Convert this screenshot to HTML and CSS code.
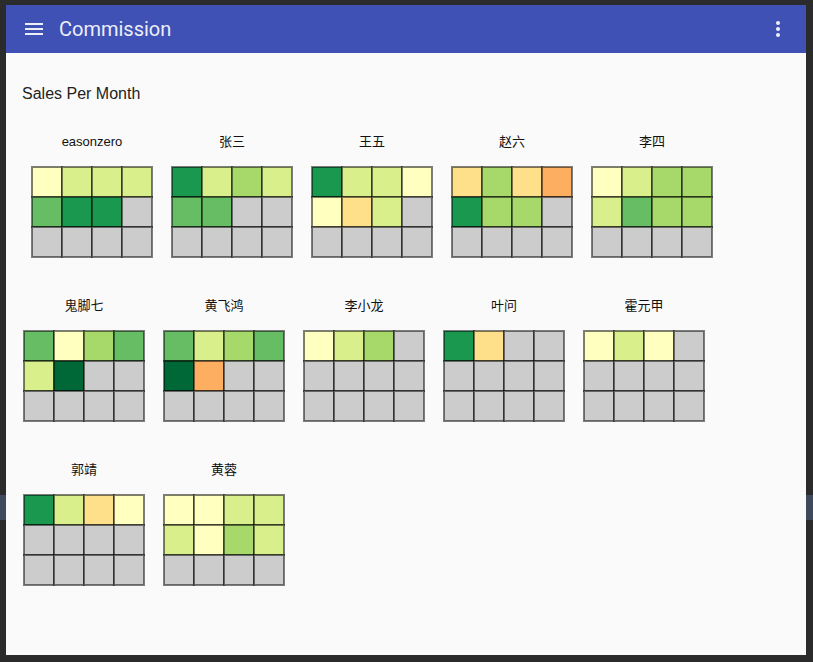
FILE: index.html
```html
<!DOCTYPE html>
<html lang="en">
<head>
<meta charset="utf-8">
<title>Commission</title>
<link rel="stylesheet" href="styles.css">
</head>
<body>
<div class="window">
  <header class="toolbar">
    <svg class="icon" viewBox="0 0 24 24" width="24" height="24"><path d="M3 6h18v2H3zM3 11h18v2H3zM3 16h18v2H3z"/></svg>
    <h1 class="title">Commission</h1>
    <span class="spacer"></span>
    <svg class="icon" viewBox="0 0 24 24" width="24" height="24"><circle cx="12" cy="6" r="2"/><circle cx="12" cy="12" r="2"/><circle cx="12" cy="18" r="2"/></svg>
  </header>
  <main class="content">
    <h2 class="heading">Sales Per Month</h2>
    <div class="charts">
      <div class="row first">
        <div class="item"><div class="label">easonzero</div>
          <div class="grid"><i class="y"></i><i class="lg"></i><i class="lg"></i><i class="lg"></i><i class="g"></i><i class="dg"></i><i class="dg"></i><i></i><i></i><i></i><i></i><i></i></div></div>
        <div class="item"><div class="label">张三</div>
          <div class="grid"><i class="dg"></i><i class="lg"></i><i class="mg"></i><i class="lg"></i><i class="g"></i><i class="g"></i><i></i><i></i><i></i><i></i><i></i><i></i></div></div>
        <div class="item"><div class="label">王五</div>
          <div class="grid"><i class="dg"></i><i class="lg"></i><i class="lg"></i><i class="y"></i><i class="y"></i><i class="lo"></i><i class="lg"></i><i></i><i></i><i></i><i></i><i></i></div></div>
        <div class="item"><div class="label">赵六</div>
          <div class="grid"><i class="lo"></i><i class="mg"></i><i class="lo"></i><i class="o"></i><i class="dg"></i><i class="mg"></i><i class="mg"></i><i></i><i></i><i></i><i></i><i></i></div></div>
        <div class="item"><div class="label">李四</div>
          <div class="grid"><i class="y"></i><i class="lg"></i><i class="mg"></i><i class="mg"></i><i class="lg"></i><i class="g"></i><i class="mg"></i><i class="mg"></i><i></i><i></i><i></i><i></i></div></div>
      </div>
      <div class="row">
        <div class="item"><div class="label">鬼脚七</div>
          <div class="grid"><i class="g"></i><i class="y"></i><i class="mg"></i><i class="g"></i><i class="lg"></i><i class="xg"></i><i></i><i></i><i></i><i></i><i></i><i></i></div></div>
        <div class="item"><div class="label">黄飞鸿</div>
          <div class="grid"><i class="g"></i><i class="lg"></i><i class="mg"></i><i class="g"></i><i class="xg"></i><i class="o"></i><i></i><i></i><i></i><i></i><i></i><i></i></div></div>
        <div class="item"><div class="label">李小龙</div>
          <div class="grid"><i class="y"></i><i class="lg"></i><i class="mg"></i><i></i><i></i><i></i><i></i><i></i><i></i><i></i><i></i><i></i></div></div>
        <div class="item"><div class="label">叶问</div>
          <div class="grid"><i class="dg"></i><i class="lo"></i><i></i><i></i><i></i><i></i><i></i><i></i><i></i><i></i><i></i><i></i></div></div>
        <div class="item"><div class="label">霍元甲</div>
          <div class="grid"><i class="y"></i><i class="lg"></i><i class="y"></i><i></i><i></i><i></i><i></i><i></i><i></i><i></i><i></i><i></i></div></div>
      </div>
      <div class="row">
        <div class="item"><div class="label">郭靖</div>
          <div class="grid"><i class="dg"></i><i class="lg"></i><i class="lo"></i><i class="y"></i><i></i><i></i><i></i><i></i><i></i><i></i><i></i><i></i></div></div>
        <div class="item"><div class="label">黄蓉</div>
          <div class="grid"><i class="y"></i><i class="y"></i><i class="lg"></i><i class="lg"></i><i class="lg"></i><i class="y"></i><i class="mg"></i><i class="lg"></i><i></i><i></i><i></i><i></i></div></div>
      </div>
    </div>
  </main>
</div>
</body>
</html>
```

FILE: styles.css
```css
html, body {
  margin: 0;
  padding: 0;
}
body {
  background:
    linear-gradient(to bottom, transparent 495px, #3e4a5c 495px, #3e4a5c 520px, transparent 520px),
    #2b2b2b;
  height: 662px;
  overflow: hidden;
  font-family: "Liberation Sans", Arial, "Noto Sans CJK SC", sans-serif;
  padding: 5px 0 0 6px;
  box-sizing: border-box;
}
.window {
  width: 800px;
  height: 650px;
  background: #fafafa;
  display: flex;
  flex-direction: column;
}
.toolbar {
  height: 48px;
  flex: 0 0 48px;
  background: #3f51b5;
  display: flex;
  align-items: center;
  padding: 0 16px;
  color: #eceef8;
}
.icon {
  fill: #eceef8;
  display: block;
}
.title {
  margin: 0 0 0 13px;
  font-family: Roboto, "Liberation Sans", sans-serif;
  font-size: 20px;
  font-weight: 400;
  line-height: 24px;
}
.spacer {
  flex: 1;
}
.content {
  padding: 31px 16px 0 16px;
}
.heading {
  margin: 0;
  font-size: 16px;
  font-weight: 400;
  line-height: 20px;
  color: #222;
}
.charts {
  margin-top: 28px;
  margin-left: -8px;
}
.row {
  display: flex;
}
.row.first {
  padding-left: 8px;
}
.item {
  width: 140px;
  text-align: center;
  margin-bottom: 39px;
}
.label {
  font-size: 13px;
  line-height: 20px;
  color: #111;
}
.grid {
  display: grid;
  grid-template-columns: repeat(4, 30px);
  grid-auto-rows: 30px;
  width: 120px;
  margin: 15px auto 0;
}
.grid i {
  display: block;
  background: #cccccc;
  box-shadow: 0 0 0 1px rgba(0, 0, 0, 0.5), inset 0 0 0 1px rgba(0, 0, 0, 0.5);
}
.grid i.y { background: #ffffbf; }
.grid i.lg { background: #d9ef8b; }
.grid i.mg { background: #a6d96a; }
.grid i.g { background: #66bd63; }
.grid i.dg { background: #1a9850; }
.grid i.xg { background: #006837; }
.grid i.lo { background: #fee08b; }
.grid i.o { background: #fdae61; }
```
